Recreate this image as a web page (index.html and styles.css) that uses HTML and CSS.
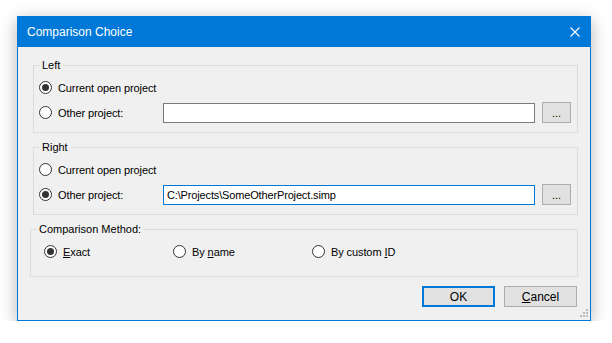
FILE: index.html
```html
<!DOCTYPE html>
<html lang="en">
  <head>
    <meta charset="UTF-8" />
    <title>Comparison Choice</title>
    <link rel="stylesheet" href="styles.css">
  </head>
  <body>
    <div class="dialog">
      <div class="titlebar">
        <span>Comparison Choice</span>
        <svg class="close" width="10" height="10" viewBox="0 0 10 10">
          <path d="M0.5 0.5 L9.5 9.5 M9.5 0.5 L0.5 9.5" stroke="#fff" stroke-width="1.1" />
        </svg>
      </div>

      <div class="content">
        <fieldset class="group side">
          <legend>Left</legend>
          <div class="row">
            <label class="radio"><span class="dot checked"></span><span>Current open project</span></label>
          </div>
          <div class="row">
            <label class="radio"><span class="dot"></span><span>Other project:</span></label>
            <div class="path"></div>
            <button class="browse">...</button>
          </div>
        </fieldset>

        <fieldset class="group side">
          <legend>Right</legend>
          <div class="row">
            <label class="radio"><span class="dot"></span><span>Current open project</span></label>
          </div>
          <div class="row">
            <label class="radio"><span class="dot checked"></span><span>Other project:</span></label>
            <div class="path focused">C:\Projects\SomeOtherProject.simp</div>
            <button class="browse">...</button>
          </div>
        </fieldset>

        <fieldset class="group method">
          <legend>Comparison Method:</legend>
          <div class="row">
            <label class="radio col-exact"><span class="dot checked"></span><span><u>E</u>xact</span></label>
            <label class="radio col-name"><span class="dot"></span><span>By <u>n</u>ame</span></label>
            <label class="radio"><span class="dot"></span><span>By custom <u>I</u>D</span></label>
          </div>
        </fieldset>

        <div class="actions">
          <button class="btn default">OK</button>
          <button class="btn"><u>C</u>ancel</button>
        </div>
      </div>

      <svg class="grip" width="8" height="8" viewBox="0 0 8 8">
        <rect x="6" y="0" width="2" height="2" />
        <rect x="3" y="3" width="2" height="2" />
        <rect x="6" y="3" width="2" height="2" />
        <rect x="0" y="6" width="2" height="2" />
        <rect x="3" y="6" width="2" height="2" />
        <rect x="6" y="6" width="2" height="2" />
      </svg>
    </div>
  </body>
</html>
```

FILE: styles.css
```css
* {
  margin: 0;
  padding: 0;
  box-sizing: border-box;
}
html {
  font-size: 11px;
}
body {
  background-color: #fff;
  font-family: "Liberation Sans", Arial, sans-serif;
  color: #000;
  padding: 16px 0 0 17px;
}

.dialog {
  position: relative;
  width: 574px;
  height: 305px;
  background-color: #f0f0f0;
  border: 1px solid #0078d7;
  border-top: none;
  box-shadow: 0 4px 16px rgba(0, 0, 0, 0.3);
}

.titlebar {
  display: flex;
  justify-content: space-between;
  align-items: center;
  height: 31px;
  margin: 0 -1px;
  padding: 0 11px 0 10px;
  background-color: #0078d7;
  color: #fff;
  font-size: 12px;
}

.content {
  padding: 11px 12px 0 0;
}

.group {
  border: 1px solid #dcdcdc;
  padding: 3px 6px 7px 5px;
  margin-bottom: 7px;
}

.group legend {
  line-height: 14px;
  margin-left: 1px;
  padding: 0 3px 0 2px;
}

.side {
  margin-left: 15px;
}

.method {
  margin-left: 12px;
  padding: 3px 6px 12px 13px;
}

.method legend {
  margin-left: -7px;
}

.row {
  display: flex;
  align-items: center;
  height: 25px;
}

.radio {
  display: flex;
  align-items: center;
  gap: 6px;
  width: 124px;
  letter-spacing: -0.1px;
}

.col-exact {
  width: 129px;
}

.col-name {
  width: 139px;
}

.dot {
  display: flex;
  justify-content: center;
  align-items: center;
  width: 13px;
  height: 13px;
  border: 1px solid #333;
  border-radius: 50%;
  background-color: #fff;
}

.dot.checked::after {
  content: "";
  width: 7px;
  height: 7px;
  border-radius: 50%;
  background-color: #333;
}

.path {
  flex: 1;
  height: 20px;
  line-height: 18px;
  padding: 0 3px;
  background-color: #fff;
  border: 1px solid #7a7a7a;
  letter-spacing: -0.15px;
  white-space: nowrap;
}

.path.focused {
  border-color: #0078d7;
}

.browse {
  width: 29px;
  height: 21px;
  margin-left: 7px;
  background-color: #e1e1e1;
  border: 1px solid #adadad;
  font-family: inherit;
  font-size: 11px;
}

.actions {
  display: flex;
  justify-content: flex-end;
  gap: 9px;
  margin-top: 9px;
  padding-right: 1px;
}

.btn {
  width: 73px;
  height: 21px;
  background-color: #e1e1e1;
  border: 1px solid #adadad;
  font-family: inherit;
  font-size: 12px;
  color: #000;
}

.btn.default {
  border: 2px solid #0078d7;
}

.grip {
  position: absolute;
  right: 2px;
  bottom: 3px;
  fill: #bcbcbc;
}
```
